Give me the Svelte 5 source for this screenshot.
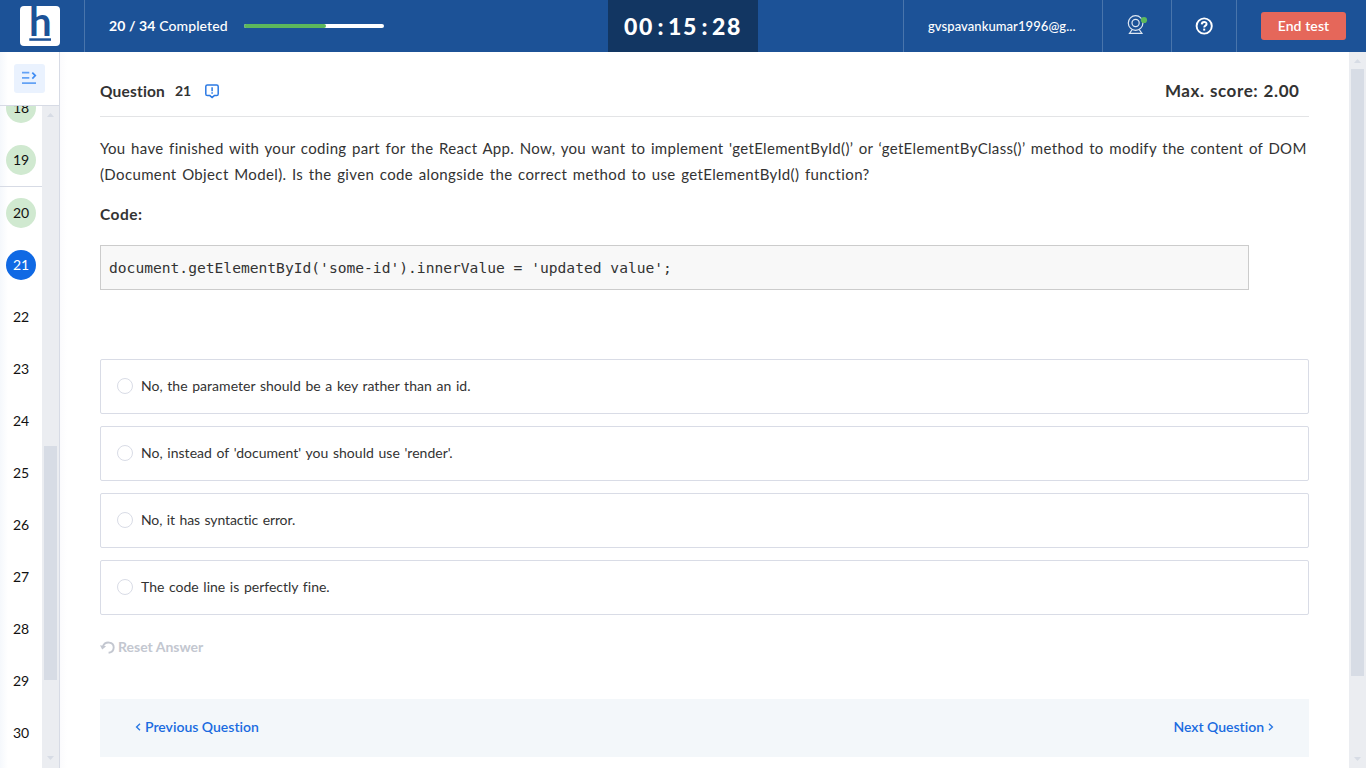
<script>
  const before = [18, 19];
  const after = [20, 21, 22, 23, 24, 25, 26, 27, 28, 29, 30];
  const done = 20;
  const total = 34;
  const current = 21;
  const options = [
    { text: 'No, the parameter should be a key rather than an id.', spacing: 0.03 },
    { text: "No, instead of 'document' you should use 'render'.", spacing: 0.03 },
    { text: 'No, it has syntactic error.', spacing: -0.1 },
    { text: 'The code line is perfectly fine.', spacing: 0.01 }
  ];
</script>

{#snippet item(n)}
  <div class="slot">
    <span class="num" class:done={n <= done} class:current={n === current}>{n}</span>
  </div>
{/snippet}

<div class="page">
  <header>
    <div class="brand">
      <svg width="40" height="40" viewBox="0 0 40 40" overflow="visible">
        <rect width="40" height="40" rx="4" fill="#fff" />
        <text x="0" y="0" transform="translate(9 30) scale(1.03 1.05)" font-size="39" class="mark">h</text>
        <rect x="9.3" y="32.3" width="21.7" height="2.5" fill="#1c5297" />
      </svg>
    </div>
    <div class="progress">
      <span class="count"><b>20 / 34</b> Completed</span>
      <span class="bar"><span class="fill" style="width: {(done / total) * 100}%"></span></span>
    </div>
    <div class="timer"><span>00</span><i>:</i><span>15</span><i>:</i><span>28</span></div>
    <div class="spacer"></div>
    <div class="user"><span>gvspavankumar1996@g...</span></div>
    <div class="cam">
      <svg width="22" height="22" viewBox="0 0 22 22" fill="none" stroke="#dfe8f3" stroke-width="1.2">
        <circle cx="8.6" cy="9" r="7.3" />
        <circle cx="8.6" cy="9" r="3.6" />
        <path d="M5.2 15.5 2.5 19.3H14.9L12.2 15.5" />
        <circle cx="17" cy="6" r="3.1" fill="#5cb85c" stroke="none" />
      </svg>
    </div>
    <div class="help">
      <svg width="18" height="18" viewBox="0 0 18 18" fill="none" stroke="#fff">
        <circle cx="9.2" cy="9" r="7.6" stroke-width="1.9" />
        <path d="M6.7 7.4C6.8 4.2 11.7 4.3 11.6 7.1 11.5 8.7 9.2 8.6 9.2 10.6" stroke-width="1.9" />
        <path d="M9.2 11.6V13.6" stroke-width="2" />
      </svg>
    </div>
    <div class="end"><button>End test</button></div>
  </header>

  <div class="body">
    <aside>
      <div class="toggle">
        <div class="tbtn">
          <svg width="15" height="13" viewBox="0 0 15 13" fill="none" stroke="#63a2f5" stroke-width="1.7">
            <path d="M0 1.7H7.3M0 6.9H7.3M0 12.1H14" />
            <path d="M10.3 1.6 13.3 4.6 10.3 7.6" stroke="#3f8cf3" />
          </svg>
        </div>
      </div>
      <div class="nav">
        <div class="list">
          <div class="group first">
            {#each before as n}{@render item(n)}{/each}
          </div>
          <div class="group">
            {#each after as n}{@render item(n)}{/each}
          </div>
        </div>
        <div class="scroll side">
          <svg class="arrow" width="7" height="4" viewBox="0 0 7 4"><path d="M0 4 3.5 0 7 4Z" fill="#d7dce5" /></svg>
          <div class="thumb"></div>
          <svg class="arrow" width="7" height="4" viewBox="0 0 7 4"><path d="M0 0 3.5 4 7 0Z" fill="#d7dce5" /></svg>
        </div>
      </div>
    </aside>

    <main>
      <div class="qhead">
        <div class="title">
          <span class="q">Question</span><span class="qn">21</span>
          <svg width="15" height="15" viewBox="0 0 15 15" fill="none" stroke="#2b79e3" stroke-width="1.5">
            <path d="M2.4 1H11.6Q13.2 1 13.2 2.6V10Q13.2 11.6 11.6 11.6H9.3L7.1 13.5 4.9 11.6H2.4Q.8 11.6 .8 10V2.6Q.8 1 2.4 1Z" />
            <path d="M7.1 3.2V7.2M7.1 8.2V9.7" />
          </svg>
        </div>
        <span class="score">Max. score: 2.00</span>
      </div>
      <div class="text">
        <p class="l1">You have finished with your coding part for the React App. Now, you want to implement 'getElementById()’ or ‘getElementByClass()’ method to modify the content of DOM</p>
        <p class="l2">(Document Object Model). Is the given code alongside the correct method to use getElementById() function?</p>
        <p class="code-label">Code:</p>
      </div>
      <pre>document.getElementById('some-id').innerValue = 'updated value';</pre>
      <div class="options">
        {#each options as o}
          <div class="option">
            <span class="radio"></span>
            <span class="label" style="letter-spacing: {o.spacing}px">{o.text}</span>
          </div>
        {/each}
      </div>
      <div class="reset">
        <svg width="15" height="13" viewBox="0 0 15 13" fill="none" stroke="#c3c7d0" stroke-width="1.9">
          <path d="M3 5.2C5.2-.3 13.8.6 13.7 6.6 13.6 9.6 11.4 11.6 8.6 11.8" />
          <path d="M0 4.2 6.2 5.2 2.2 8.6Z" fill="#c3c7d0" stroke="none" />
        </svg>
        <span>Reset Answer</span>
      </div>
      <div class="pager">
        <span class="link prev">
          <svg width="6" height="8" viewBox="0 0 6 8"><path d="M5 .8 1.6 4 5 7.2" fill="none" stroke="#2b79e3" stroke-width="1.4" /></svg>
          <span>Previous Question</span>
        </span>
        <span class="link next">
          <span>Next Question</span>
          <svg width="6" height="8" viewBox="0 0 6 8"><path d="M1 .8 4.4 4 1 7.2" fill="none" stroke="#2b79e3" stroke-width="1.4" /></svg>
        </span>
      </div>
    </main>
    <div class="scroll page-scroll">
      <svg class="arrow" width="7" height="4" viewBox="0 0 7 4"><path d="M0 4 3.5 0 7 4Z" fill="#d7dce5" /></svg>
      <div class="thumb"></div>
      <svg class="arrow" width="7" height="4" viewBox="0 0 7 4"><path d="M0 0 3.5 4 7 0Z" fill="#d7dce5" /></svg>
    </div>
  </div>
</div>

<style>
  :global(body) { margin: 0; overflow: hidden; }
  .page { width: 1366px; height: 768px; display: flex; flex-direction: column; font-family: Lato, sans-serif; font-size: 14px; color: #333; background: #fff; white-space: nowrap; overflow: hidden; font-variant-ligatures: none; }
  .page * { box-sizing: border-box; }
  svg { display: block; flex: none; }
  header { height: 52px; flex: none; display: flex; background: #1c5297; color: #fff; }
  .brand { width: 85px; padding: 6px 0 0 20px; border-right: 1px solid #4975ac; }
  .mark { font-family: Lato, sans-serif; font-weight: 700; fill: #1c5297; }
  .progress { width: 523px; display: flex; align-items: center; padding-left: 24px; }
  .count { width: 135px; font-weight: 500; letter-spacing: 0.1px; padding-bottom: 1px; }
  .count b { font-weight: 700; }
  .bar { width: 140px; height: 4px; border-radius: 2px; background: #fff; display: flex; overflow: hidden; }
  .fill { background: #5cb85c; border-radius: 0 2px 2px 0; }
  .timer { width: 150px; background: #123662; display: flex; align-items: center; padding: 0 0 1px 15px; font-weight: 900; font-size: 23px; }
  .timer span { width: 30px; letter-spacing: 1.7px; padding-left: 1px; }
  .timer i { width: 14px; font-style: normal; text-align: center; padding-left: 1px; }
  .spacer { width: 145px; }
  .user { width: 199px; border-left: 1px solid #4975ac; display: flex; align-items: center; padding: 0 0 1px 24px; font-size: 13px; font-weight: 500; letter-spacing: 0.07px; }
  .cam { width: 69px; border-left: 1px solid #4975ac; padding: 14px 0 0 24px; }
  .help { width: 65px; border-left: 1px solid #4975ac; padding: 17px 0 0 23px; }
  .end { flex: 1; border-left: 1px solid #4975ac; padding: 12px 0 0 24px; }
  button { width: 85px; height: 28px; border: 0; padding: 0 0 2px; border-radius: 3px; background: #e5675a; color: #fff; font: 600 14px Lato, sans-serif; letter-spacing: 0.1px; }
  .body { flex: 1; display: flex; min-height: 0; }
  aside { width: 60px; border-right: 1px solid #d7dbe5; display: flex; flex-direction: column; background: linear-gradient(90deg, #f5f8fc, #fff 8px); }
  .toggle { height: 54px; flex: none; border-bottom: 1px solid #d7dbe5; padding: 12px 0 0 14px; }
  .tbtn { width: 31px; height: 29px; border-radius: 3px; background: #eaf2fe; display: flex; padding: 7px 0 0 8px; }
  .nav { flex: 1; display: flex; min-height: 0; }
  .list { width: 42px; overflow: hidden; color: #111; font-size: 14px; }
  .group.first { margin-top: -24px; border-bottom: 1px solid #d7dbe5; }
  .slot { height: 52px; display: flex; align-items: center; padding-left: 6px; }
  .num { width: 30px; height: 30px; border-radius: 50%; display: flex; align-items: center; justify-content: center; padding-bottom: 1px; }
  .done { background: #d0e9d0; }
  .current { background: #1069e4; color: #fff; }
  .scroll { width: 17px; background: #ebedf1; display: flex; flex-direction: column; align-items: center; justify-content: flex-start; }
  .thumb { width: 13px; background: #d7dce5; }
  .side { padding: 7px 0 8px; }
  .side .thumb { height: 234px; margin: 329px 0 76px; }
  .page-scroll { padding: 7px 0; }
  .page-scroll .thumb { height: 607px; margin: 6px 0 81px; }
  main { width: 1289px; padding: 0 40px; background: linear-gradient(90deg, #fbfbfd, #fff 7px); }
  .qhead { height: 65px; border-bottom: 1px solid #e3e4e6; display: flex; justify-content: space-between; padding: 0 10px 0 0; font-weight: 700; }
  .title { display: flex; align-items: center; padding-top: 13px; font-size: 15.5px; }
  .title svg { margin-top: 1px; }
  .q { width: 75px; letter-spacing: 0.18px; }
  .qn { width: 30px; font-size: 14px; }
  .score { padding-top: 13px; align-self: center; font-size: 17px; letter-spacing: 0.6px; word-spacing: 0.5px; margin-right: -0.6px; }
  .text { padding-top: 18px; font-size: 15px; line-height: 26px; }
  p { margin: 0; }
  .l1 { letter-spacing: 0.32px; word-spacing: 1.4px; }
  .l2 { letter-spacing: 0.365px; word-spacing: 1.4px; }
  .code-label { margin-top: 14px; font-weight: 700; font-size: 15.5px; letter-spacing: 0.5px; }
  pre { margin: 18px 0 0; width: 1149px; height: 45px; border: 1px solid #ccc; background: #f8f8f8; padding: 0 8px; font: 14.62px/43px "DejaVu Sans Mono", monospace; color: #333; }
  .options { margin-top: 69px; display: grid; gap: 12px; }
  .option { height: 55px; border: 1px solid #d9dce6; border-radius: 2px; display: flex; align-items: center; padding: 0 0 1px 16px; gap: 8px; }
  .label { word-spacing: 1px; padding-bottom: 1px; }
  .radio { width: 16px; height: 16px; border: 1px solid #d9dce6; border-radius: 50%; }
  .reset { margin-top: 20px; height: 24px; display: flex; align-items: center; gap: 3px; font-weight: 700; color: #c3c7d0; }
  .reset span { padding-bottom: 1px; }
  .pager { margin-top: 40px; height: 58px; background: #f3f7fa; display: flex; justify-content: space-between; padding: 0 35px 2px; }
  .link { display: flex; align-items: center; gap: 4px; color: #1a6be0; font-weight: 600; }
  .link span { padding-bottom: 1px; }
</style>
